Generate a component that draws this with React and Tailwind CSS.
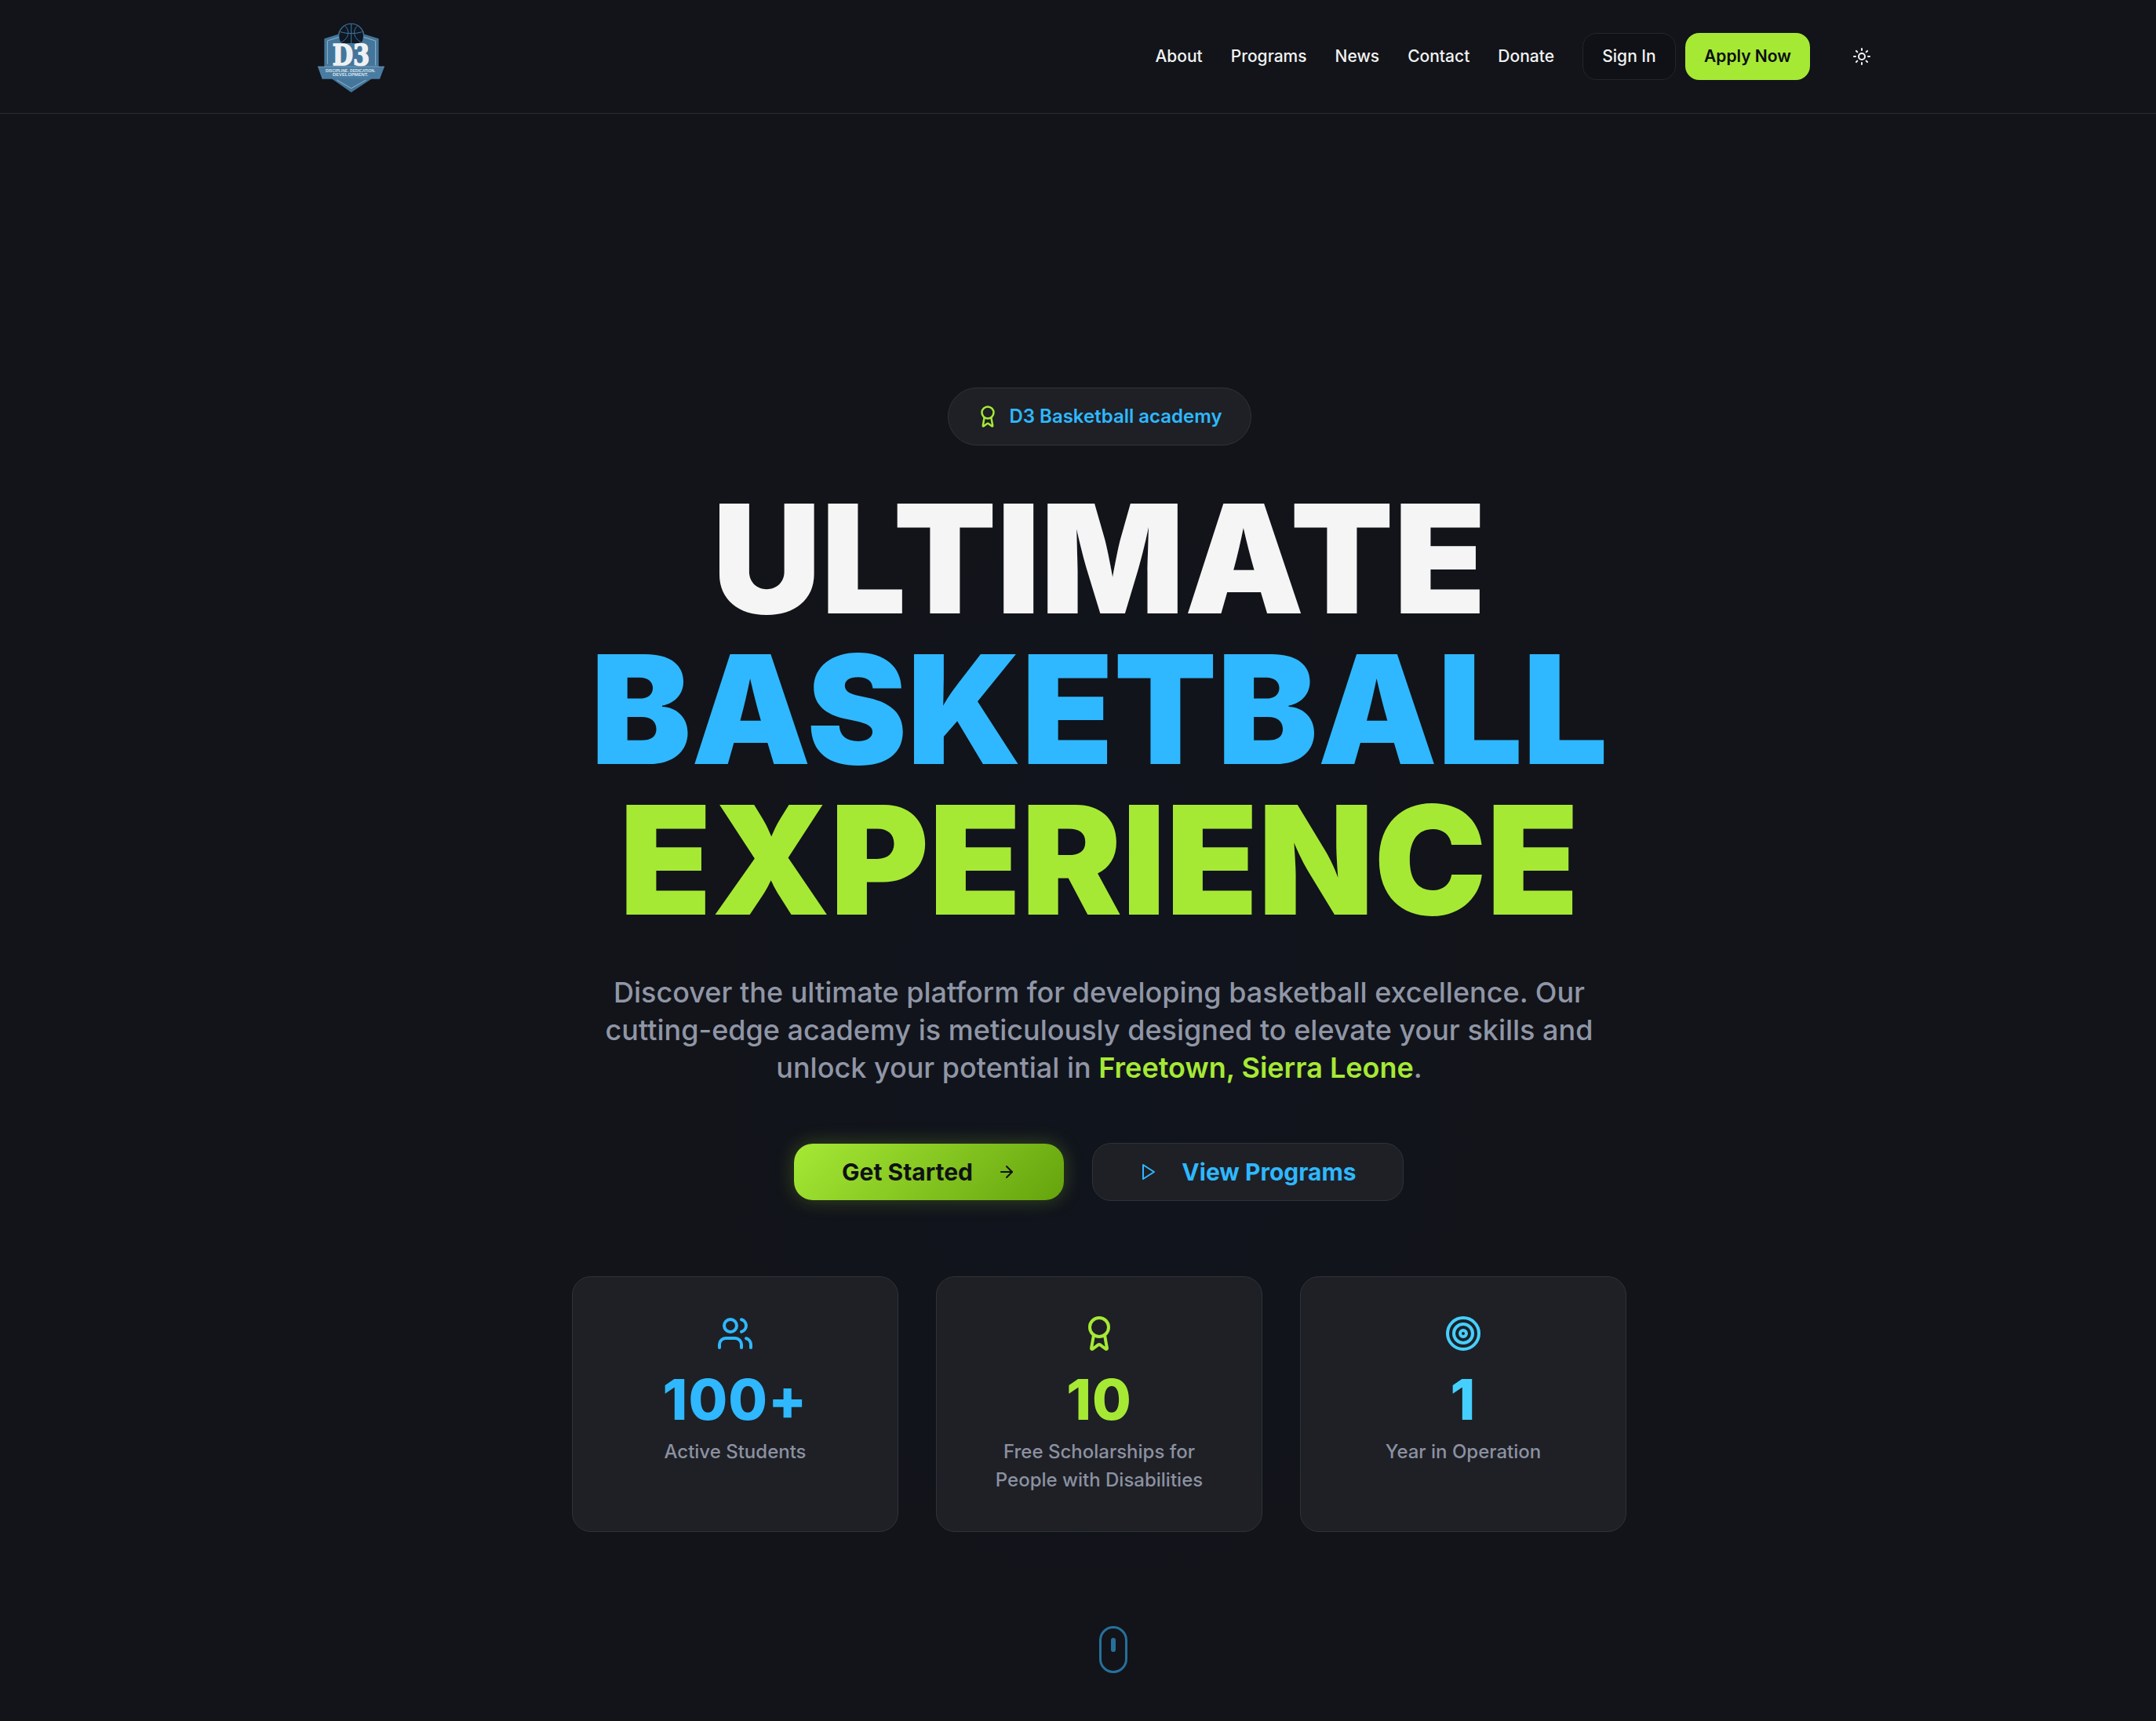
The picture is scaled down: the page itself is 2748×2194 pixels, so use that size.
import React from "react";
import { Award, Users, Target, ArrowRight, Sun } from "lucide-react";

function Logo() {
  return (
    <svg width="96" height="96" viewBox="120 72 288 288" aria-label="D3 logo">
      <circle cx="263" cy="140" r="51" fill="#44769c" />
      <path d="M160 148 L222 128 L304 128 L368 148 L368 262 L340 302 L263 353 L190 302 L160 262 Z" fill="#44769c" />
      <path d="M172 156 L216 142 M310 142 L356 156 L356 165 M172 156 L172 245 M356 165 L356 250 M208 306 L263 338 L320 306" fill="none" stroke="#94b4ca" strokeWidth="3" />
      <circle cx="263" cy="138" r="46" fill="#0e1724" />
      <path d="M263 92 L263 170 M222 122 C248 130 278 130 304 122 M240 100 C262 122 250 148 224 163 M286 100 C264 122 276 148 302 163" fill="none" stroke="#44769c" strokeWidth="3" />
      <path d="M180 165 L346 165 L346 255 L180 255 Z" fill="#44769c" />
      <text x="191" y="248" textLength="142" lengthAdjust="spacingAndGlyphs" fontFamily="'DejaVu Serif', serif" fontWeight="900" fontSize="112" fill="#eef1f3" stroke="#eef1f3" strokeWidth="5">D3</text>
      <path d="M135 255 L390 255 L372 302 L152 302 Z" fill="#4a7ca2" />
      <path d="M135 255 L390 255" stroke="#94b4ca" strokeWidth="2" />
      <text x="260" y="276" textAnchor="middle" textLength="190" lengthAdjust="spacingAndGlyphs" fontFamily="'Liberation Sans', sans-serif" fontWeight="700" fontSize="14" fill="#d8e4ec">DISCIPLINE. DEDICATION.</text>
      <text x="260" y="292" textAnchor="middle" textLength="136" lengthAdjust="spacingAndGlyphs" fontFamily="'Liberation Sans', sans-serif" fontWeight="700" fontSize="14" fill="#d8e4ec">DEVELOPMENT.</text>
    </svg>
  );
}

function Stat({ icon: Icon, value, color, children }) {
  return (
    <div className="flex h-[326px] flex-col items-center rounded-[24px] border-[1.5px] border-[#30323a] bg-[#1e2026] px-[48px] pt-[48px] text-center">
      <Icon size={48} strokeWidth={2} color={color} />
      <div className="mt-[24px] text-[72px] leading-[72px] font-extrabold tracking-[1px]" style={{ color }}>{value}</div>
      <div className="mt-[13px] text-[24px] leading-[36px] font-medium text-[#8c91a1]">{children}</div>
    </div>
  );
}

export default function App() {
  return (
    <div className="relative min-h-[2194px] overflow-hidden bg-[#12141a] font-['Inter',sans-serif]">
      <header className="flex h-[145px] items-center justify-between border-b-[1.5px] border-[#2c2e35] pr-[345px] pl-[400px] pb-[1px]">
        <Logo />
        <nav className="flex items-center text-[21px] font-medium text-[#f2f2f2]">
          <a className="mr-[36px]">About</a>
          <a className="mr-[36px]">Programs</a>
          <a className="mr-[36px]">News</a>
          <a className="mr-[36px]">Contact</a>
          <a className="mr-[36px]">Donate</a>
          <button className="h-[60px] w-[119px] rounded-[18px] border-[1.5px] border-[#24262c] bg-[#0f1116]">Sign In</button>
          <button className="ml-[12px] h-[60px] w-[159px] rounded-[18px] bg-[#a6e935] font-semibold text-[#0b0d10]">Apply Now</button>
          <button className="ml-[36px] flex h-[60px] w-[60px] items-center justify-center text-[#f2f2f2]"><Sun size={24} strokeWidth={2} /></button>
        </nav>
      </header>

      <main className="relative bg-[radial-gradient(ellipse_500px_700px_at_1401px_1200px,#10141d,#12141a)] pt-[349px] pr-[675px] pb-[240px] pl-[729px]">
        <div className="flex flex-col items-center">
          <div className="flex h-[74px] w-[387px] items-center justify-center gap-[12px] rounded-full border-[1.5px] border-[#30323a] bg-[#1e2026]">
            <Award size={30} color="#a6e935" strokeWidth={2} />
            <span className="text-[24px] font-semibold text-[#2fb8ff]">D3 Basketball academy</span>
          </div>

          <h1 className="mt-[48px] text-center text-[192px] leading-[192px] font-black whitespace-nowrap">
            <span className="block text-[#f5f5f5]">ULTIMATE</span>
            <span className="block text-[#2fb8ff]">BASKETBALL</span>
            <span className="block text-[#a6e935]">EXPERIENCE</span>
          </h1>

          <p className="mt-[49px] w-[1344px] text-center text-[36px] leading-[48px] font-medium text-[#9096a6]">
            Discover the ultimate platform for developing basketball excellence. Our cutting-edge academy is meticulously designed to elevate your skills and unlock your potential in <span className="font-semibold text-[#a6e935]">Freetown, Sierra Leone</span>.
          </p>

          <div className="mt-[72px] -ml-[1px] flex items-center gap-[36px] text-[30px] font-bold">
            <button className="flex h-[72px] w-[344px] items-center justify-center gap-[31px] rounded-[24px] bg-[linear-gradient(135deg,#a6e935,#65a30d)] text-[#0f1116] shadow-[0_0_24px_rgba(166,233,53,0.25)]">
              Get Started <ArrowRight size={24} strokeWidth={2} />
            </button>
            <button className="flex h-[74px] w-[397px] items-center justify-center gap-[30px] rounded-[24px] border-[1.5px] border-[#30323a] bg-[#1e2026] text-[#2fb8ff]">
              <svg width="24" height="24" viewBox="0 0 24 24" fill="none" stroke="#2fb8ff" strokeWidth="2" strokeLinecap="round" strokeLinejoin="round"><polygon points="5 3 19 12 5 21 5 3" /></svg>
              View Programs
            </button>
          </div>

          <div className="mt-[96px] grid w-[1344px] grid-cols-3 gap-[48px]">
            <Stat icon={Users} value="100+" color="#2fb8ff">Active Students</Stat>
            <Stat icon={Award} value="10" color="#a6e935">Free Scholarships for<br />People with Disabilities</Stat>
            <Stat icon={Target} value="1" color="#45cfff">Year in Operation</Stat>
          </div>
        </div>
      </main>

      <div className="absolute top-[2073px] left-[1401px] flex h-[60px] w-[36px] justify-center rounded-full border-[3px] border-[#27709b] pt-[12px]">
        <div className="h-[18px] w-[6px] rounded-full bg-[#27709b]" />
      </div>
    </div>
  );
}
